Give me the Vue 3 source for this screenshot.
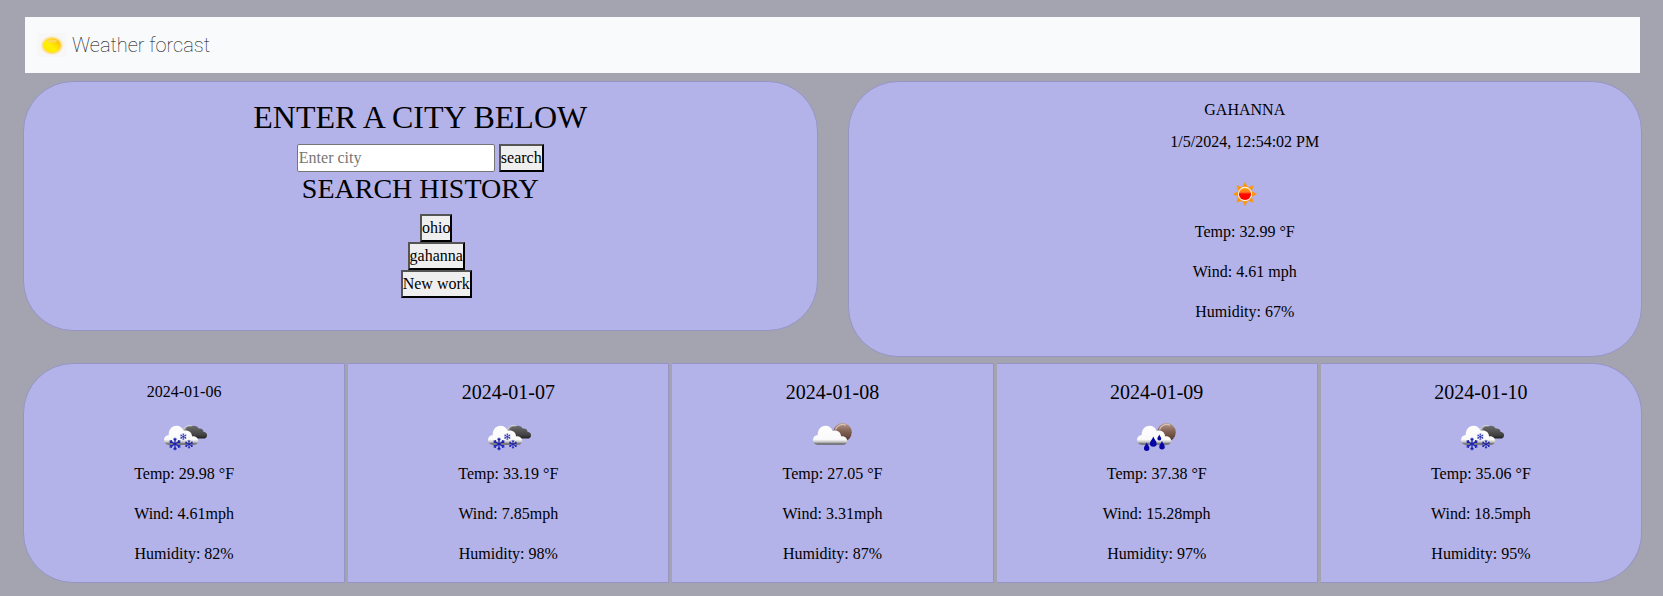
<script setup>
import { ref } from 'vue'

const city = ref('')
const searches = ['ohio', 'gahanna', 'New work']
const current = ['Temp: 32.99 °F', 'Wind: 4.61 mph', 'Humidity: 67%']
const forecast = [
  { date: '2024-01-06', icon: 'snow', temp: '29.98', wind: '4.61', humidity: 82 },
  { date: '2024-01-07', icon: 'snow', temp: '33.19', wind: '7.85', humidity: 98 },
  { date: '2024-01-08', icon: 'cloud', temp: '27.05', wind: '3.31', humidity: 87 },
  { date: '2024-01-09', icon: 'rain', temp: '37.38', wind: '15.28', humidity: 97 },
  { date: '2024-01-10', icon: 'snow', temp: '35.06', wind: '18.5', humidity: 95 },
]
const flakes = [
  { x: 16, y: 32, s: 6.6 },
  { x: 24.3, y: 24.7, s: 3.4 },
  { x: 30, y: 32.3, s: 4.5 },
]
const drops = [
  { x: 21.3, y: 29.7, s: 1.35 },
  { x: 27.3, y: 25.5, s: 0.8 },
  { x: 14.7, y: 34.7, s: 1.1 },
  { x: 30, y: 33.2, s: 1.1 },
]
const rays = [0, 45, 90, 135, 180, 225, 270, 315]
</script>

<template>
  <div class="page">
    <svg class="defs" width="0" height="0" aria-hidden="true">
      <defs>
        <linearGradient id="cloudFill" x1="0" y1="0" x2="0" y2="1">
          <stop offset="0" stop-color="#fff" />
          <stop offset="0.72" stop-color="#fafafa" />
          <stop offset="0.86" stop-color="#c4c4c4" />
          <stop offset="0.94" stop-color="#7a7a7a" />
          <stop offset="1" stop-color="#606060" />
        </linearGradient>
        <linearGradient id="darkFill" x1="0" y1="0" x2="0" y2="1">
          <stop offset="0" stop-color="#6b6b6b" />
          <stop offset="0.75" stop-color="#404040" />
          <stop offset="1" stop-color="#202020" />
        </linearGradient>
        <linearGradient id="moonFill" x1="0" y1="0" x2="0" y2="1">
          <stop offset="0" stop-color="#b89a8a" />
          <stop offset="0.4" stop-color="#86675a" />
          <stop offset="1" stop-color="#4e3426" />
        </linearGradient>
        <linearGradient id="sunFill" x1="0" y1="0" x2="0" y2="1">
          <stop offset="0" stop-color="#ffa000" />
          <stop offset="0.35" stop-color="#ff7a20" />
          <stop offset="0.5" stop-color="#ff0800" />
          <stop offset="1" stop-color="#ff0000" />
        </linearGradient>
        <linearGradient id="logoFill" x1="0" y1="1" x2="1" y2="0">
          <stop offset="0" stop-color="#ffe600" />
          <stop offset="0.45" stop-color="#fff000" />
          <stop offset="1" stop-color="#ffb000" />
        </linearGradient>
        <radialGradient id="logoGlow">
          <stop offset="0.6" stop-color="#ffc83c" />
          <stop offset="0.8" stop-color="#ffdf8c" stop-opacity="0.7" />
          <stop offset="1" stop-color="#f8f8f4" stop-opacity="0" />
        </radialGradient>
      </defs>
    </svg>

    <nav class="navbar">
      <a class="brand" href="#">
        <svg class="logo" viewBox="0 0 30 24" aria-hidden="true">
          <rect width="30" height="24" fill="#f7f7f7" />
          <ellipse cx="15" cy="12.5" rx="12.5" ry="10.5" fill="url(#logoGlow)" />
          <ellipse cx="15" cy="12.5" rx="8.6" ry="7.1" fill="url(#logoFill)" />
          <ellipse cx="15" cy="8" rx="5" ry="1.8" fill="#ffd866" opacity="0.8" />
        </svg>
        Weather forcast
      </a>
    </nav>

    <main>
      <div class="top">
        <section class="card search-card">
          <h1><label for="city">ENTER A CITY BELOW</label></h1>
          <form class="search" @submit.prevent>
            <input id="city" v-model="city" type="text" placeholder="Enter city" />
            <button type="submit">search</button>
          </form>
          <h2>SEARCH HISTORY</h2>
          <ul class="history">
            <li v-for="name in searches" :key="name">
              <button type="button">{{ name }}</button>
            </li>
          </ul>
        </section>

        <section class="card current">
          <p class="place">GAHANNA</p>
          <p class="time">1/5/2024, 12:54:02 PM</p>
          <svg class="icon" viewBox="0 0 50 50" role="img" aria-label="Clear sky">
            <path
              v-for="angle in rays"
              :key="angle"
              d="M22.6 17 25 12.4 27.4 17Z"
              fill="#ff9408"
              stroke="#ff9408"
              stroke-width="0.5"
              :transform="`rotate(${angle} 25 24)`"
            />
            <circle cx="25" cy="24" r="7.2" fill="#fff0d8" />
            <circle cx="25" cy="24" r="6.1" fill="url(#sunFill)" />
          </svg>
          <p v-for="line in current" :key="line" class="reading">{{ line }}</p>
        </section>
      </div>

      <section class="forecast">
        <article v-for="day in forecast" :key="day.date" class="card day">
          <h3>{{ day.date }}</h3>
          <svg class="icon" viewBox="0 0 50 50" role="img" :aria-label="day.icon">
            <template v-if="day.icon === 'snow'">
              <circle cx="30" cy="19" r="5.4" fill="#8a8a8a" stroke="#e4e4e4" stroke-width="0.9" />
              <path
                d="M27 24.5C25 19 27.5 14 32 14.6C35 13 38.5 14 39.6 16.6C42.4 16 44.6 17.6 44.6 20C47.5 20 48.6 22.6 47.8 24.4C47.3 25.8 46.2 26.4 44.6 26.4H29Z"
                fill="url(#darkFill)"
              />
            </template>
            <g v-else>
              <circle cx="34.5" cy="20.3" r="9.3" fill="url(#moonFill)" />
              <path d="M27.5 17.5A7.6 7.6 0 0 1 38 13.2" fill="none" stroke="#d8c4b8" stroke-width="1.2" />
            </g>
            <path
              d="M9.5 32.7C6.8 32.7 5 30.5 5 27.8C5 25.2 7 23.2 9.7 23C9.5 18 12.8 13.8 17.5 13.8C21 13.8 23.6 15.8 24.5 19C28.5 17.4 33 19.8 33 24.4C36.5 24 39.2 26.2 39.2 29C39.2 31.4 37.4 32.7 35 32.7Z"
              fill="url(#cloudFill)"
            />
            <g v-if="day.icon === 'snow'" stroke="#1a20b0" stroke-linecap="round">
              <g
                v-for="flake in flakes"
                :key="flake.x"
                :transform="`translate(${flake.x} ${flake.y}) scale(${flake.s / 6})`"
              >
                <path
                  v-for="angle in [0, 60, 120, 180, 240, 300]"
                  :key="angle"
                  d="M0 0V-5.3M-1 -4.5L0 -3.2L1 -4.5"
                  fill="none"
                  stroke-width="1.1"
                  :transform="`rotate(${angle})`"
                />
              </g>
            </g>
            <g v-if="day.icon === 'rain'" fill="#0606a8">
              <path
                v-for="drop in drops"
                :key="drop.x"
                d="M0 -3.8C0.7 -1.8 2.5 -0.3 2.5 1.4A2.5 2.4 0 0 1 -2.5 1.4C-2.5 -0.3 -0.7 -1.8 0 -3.8Z"
                :transform="`translate(${drop.x} ${drop.y}) scale(${drop.s})`"
              />
            </g>
          </svg>
          <p class="reading">Temp: {{ day.temp }} °F</p>
          <p class="reading">Wind: {{ day.wind }}mph</p>
          <p class="reading">Humidity: {{ day.humidity }}%</p>
        </article>
      </section>
    </main>
  </div>
</template>

<style>
body {
  background: #a4a4b0;
}
</style>

<style scoped>
.page,
.page * {
  box-sizing: border-box;
}
.page {
  padding: 17px 21px 13px 23px;
  color: #000;
  font: 16px/24px "Liberation Serif", "Times New Roman", serif;
}
.defs {
  position: absolute;
}
h1,
h2,
h3,
p,
ul {
  margin: 0;
  padding: 0;
  font-weight: 400;
}
.navbar {
  display: flex;
  align-items: center;
  height: 56px;
  margin: 0 2px 8px;
  padding: 0 12px;
  background: #f8fafc;
}
.brand {
  display: flex;
  align-items: center;
  gap: 5px;
  color: #000;
  font: 100 20px/30px Roboto, sans-serif;
  text-decoration: none;
}
.logo {
  width: 30px;
  height: 24px;
}
.card {
  padding: 16px;
  border: 1px solid #9594c4;
  background: #b3b3e9;
  text-align: center;
}
.top {
  display: grid;
  grid-template-columns: 1fr 1fr;
  align-items: start;
  gap: 30px;
  margin-bottom: 6px;
}
.top .card {
  border-radius: 50px;
}
h1 {
  margin-bottom: 8px;
  font-size: 32px;
  line-height: 38px;
}
h2 {
  margin-bottom: 8px;
  font-size: 28px;
  line-height: 34px;
}
.search {
  display: flex;
  justify-content: center;
  gap: 4px;
}
input {
  width: 198px;
  height: 28px;
  margin: 0;
  padding: 1px;
  border: 1px solid #767676;
  border-radius: 2px;
  background: #fff;
  color: #000;
  font: inherit;
}
input::placeholder {
  color: #757575;
}
button {
  display: block;
  margin: 0;
  padding: 0;
  border: 2px outset #000;
  border-radius: 0;
  background: #efefef;
  color: #000;
  font: inherit;
}
.history {
  display: flex;
  flex-direction: column;
  align-items: center;
  margin-bottom: 16px;
  padding-left: 32px;
  list-style: none;
}
.place {
  margin-bottom: 8px;
}
.time {
  margin-bottom: 16px;
}
.icon {
  display: block;
  width: 50px;
  height: 50px;
  margin: 0 auto;
}
.reading {
  margin-bottom: 16px;
}
.day .reading:last-child {
  margin-bottom: 0;
}
.forecast {
  display: flex;
  gap: 3px;
}
.day {
  flex: 1 0 0;
}
.day + .day {
  border-left: 0;
}
.day:first-child {
  border-radius: 50px 0 0 50px;
}
.day:last-child {
  border-radius: 0 50px 50px 0;
}
h3 {
  margin-bottom: 8px;
  font-size: 20px;
  line-height: 24px;
}
.day:first-child h3 {
  font-size: 16px;
}
</style>
